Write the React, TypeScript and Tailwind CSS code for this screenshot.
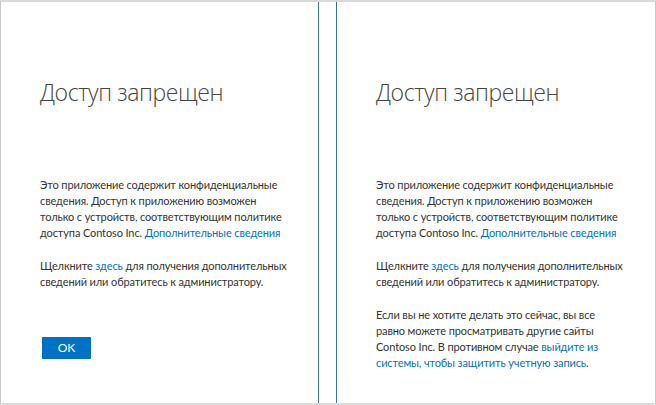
import React from 'react';

const body = { fontFamily: 'Lato, "Liberation Sans", Arial, sans-serif' };
const heading = { fontFamily: '"Open Sans", "Liberation Sans", sans-serif' };

function Panel({ children, edge }: { children: React.ReactNode; edge: string }) {
  return (
    <section className={`h-full overflow-hidden bg-white pl-[39px] pt-[74px] ${edge}`}>
      <h1 className="text-[23px] leading-[32px] font-light text-[#444444] tracking-[-0.4px]" style={heading}>
        Доступ запрещен
      </h1>
      <div className="mt-[69px] text-[11px] leading-[16px] tracking-[-0.12px] text-[#333333] whitespace-nowrap">
        {children}
      </div>
    </section>
  );
}

function Intro() {
  return (
    <>
      <p>
        Это приложение содержит конфиденциальные<br />
        сведения. Доступ к приложению возможен<br />
        только с устройств, соответствующим политике<br />
        доступа Contoso Inc. <a className="text-[#0072c6]">Дополнительные сведения</a>
      </p>
      <p className="mt-[17px]">
        Щелкните <a className="text-[#0072c6]">здесь</a> для получения дополнительных<br />
        сведений или обратитесь к администратору.
      </p>
    </>
  );
}

export default function App() {
  return (
    <main
      className="w-[656px] h-[405px] bg-white border-t-2 border-b-2 border-l border-r border-[#dadada] border-l-[#c8c8c8] border-r-[#c8c8c8] flex"
      style={body}
    >
      {/* Left: with OK button */}
      <div className="w-[318px] h-full">
        <Panel edge="border-r border-[#3b6fa3]">
          <Intro />
          <button className="mt-[47px] ml-[2px] w-[49px] h-[22px] bg-[#0072c6] text-white text-[12px] leading-[22px] tracking-normal">
            OK
          </button>
        </Panel>
      </div>

      <div className="w-[17px]" />

      {/* Right: sign-out hint */}
      <div className="flex-1 h-full">
        <Panel edge="border-l border-[#3b6fa3]">
          <Intro />
          <p className="mt-[17px]">
            Если вы не хотите делать это сейчас, вы все<br />
            равно можете просматривать другие сайты<br />
            Contoso Inc. В противном случае <a className="text-[#0072c6]">выйдите из</a><br />
            <a className="text-[#0072c6]">системы, чтобы защитить учетную запись</a>.
          </p>
        </Panel>
      </div>
    </main>
  );
}
